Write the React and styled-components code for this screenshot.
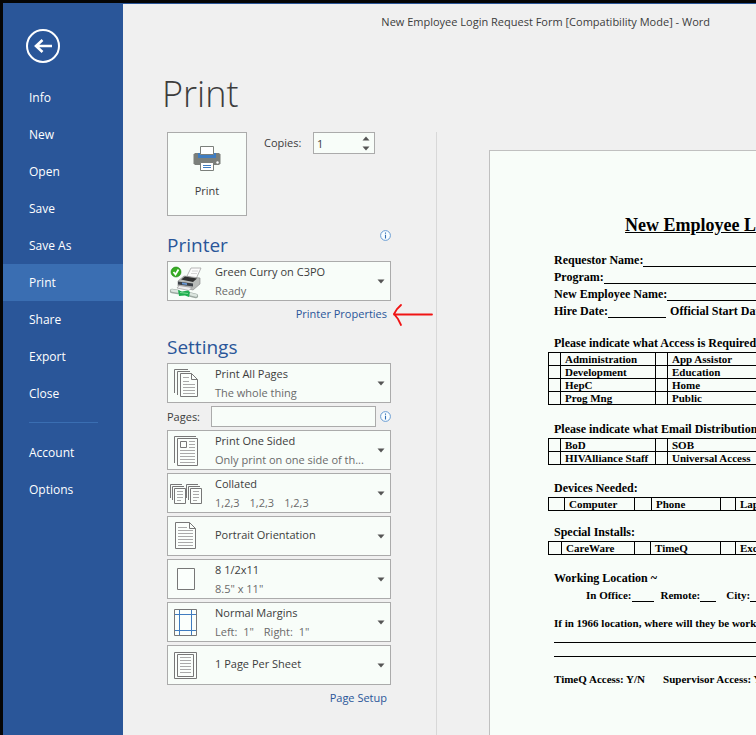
import React, { useState } from "react";
import styled, { createGlobalStyle } from "styled-components";

const GlobalStyle = createGlobalStyle`
  * {
    margin: 0;
    padding: 0;
    box-sizing: border-box;
  }
  body {
    background: #f0f0f0;
    color: #3c3c3c;
    font-family: "Open Sans", "Noto Sans", sans-serif;
    font-size: 11px;
    overflow-x: hidden;
  }
  button, input, select {
    font: inherit;
    color: inherit;
  }
`;

const Shell = styled.div`
  display: grid;
  grid-template-columns: 120px minmax(0, 1fr);
  min-height: 100vh;
  border-left: 3px solid #050505;
  border-top: 3px solid #050505;
`;

const Sidebar = styled.nav`
  display: flex;
  flex-direction: column;
  padding-top: 26px;
  background: #2a5699;
  font-size: 12px;
`;

const BackButton = styled.button`
  width: 34px;
  height: 34px;
  margin: 0 0 16px 23px;
  border: none;
  background: none;
  cursor: pointer;
  svg {
    display: block;
  }
`;

const NavItem = styled.a`
  height: 37px;
  padding-left: 26px;
  line-height: 37px;
  color: #fff;
  text-decoration: none;
  background: ${(p) => (p.$active ? "#3a6eb2" : "transparent")};
  &:hover {
    background: #3a6eb2;
  }
`;

const NavRule = styled.hr`
  margin: 10px 25px 11px 26px;
  border: none;
  border-top: 1px solid #3a6eb2;
`;

const Main = styled.main`
  display: flex;
  flex-direction: column;
  min-width: 0;
  height: calc(100vh - 3px);
  min-height: 700px;
  overflow: hidden;
  border-top: 1px solid #2a5699;
`;

const WindowTitle = styled.header`
  padding: 8px 46px 0 0;
  line-height: 20px;
  text-align: right;
`;

const PageTitle = styled.h1`
  padding-left: 39px;
  margin: 32px 0 8px;
  font-size: 36px;
  font-weight: 300;
  line-height: 60px;
`;

const Columns = styled.div`
  display: flex;
  flex: 1;
  min-height: 0;
`;

const Controls = styled.section`
  flex: none;
  width: 314px;
  padding: 0 45px 0 44px;
  border-right: 1px solid #d8d8d8;
`;

const PrintRow = styled.div`
  display: flex;
  align-items: flex-start;
`;

const PrintButton = styled.button`
  display: flex;
  flex-direction: column;
  align-items: center;
  gap: 12px;
  width: 80px;
  height: 84px;
  padding-top: 12px;
  border: 1px solid #ababab;
  background: #f8fdf9;
  cursor: pointer;
`;

const CopiesLabel = styled.label`
  margin-left: 17px;
  width: 49px;
  line-height: 22px;
`;

const Spinner = styled.div`
  display: flex;
  width: 62px;
  height: 22px;
  border: 1px solid #ababab;
  background: #f8fdf9;
`;

const SpinnerInput = styled.input`
  flex: 1;
  min-width: 0;
  padding-left: 3px;
  border: none;
  background: none;
  appearance: textfield;
  &::-webkit-inner-spin-button {
    appearance: none;
  }
`;

const SpinnerSteps = styled.div`
  display: flex;
  flex-direction: column;
  width: 16px;
`;

const StepButton = styled.button`
  display: flex;
  flex: 1;
  align-items: center;
  justify-content: center;
  border: none;
  background: none;
`;

const SectionHead = styled.div`
  display: flex;
  align-items: flex-start;
  justify-content: space-between;
  padding-top: ${(p) => p.$top}px;
`;

const SectionTitle = styled.h2`
  font-size: 19px;
  font-weight: 400;
  line-height: 31px;
  color: #2a5699;
`;

const InfoButton = styled.button`
  width: 11px;
  height: 11px;
  border: none;
  background: none;
  svg {
    display: block;
  }
`;

const Stack = styled.div`
  display: flex;
  flex-direction: column;
  gap: 3px;
`;

const Picker = styled.label`
  display: grid;
  grid-template-columns: 37px minmax(0, 1fr) 8px;
  align-items: center;
  column-gap: 10px;
  height: 40px;
  padding-right: 5px;
  border: 1px solid #ababab;
  background: #f8fdf9;
  svg {
    display: block;
  }
`;

const PickerText = styled.span`
  display: flex;
  flex-direction: column;
  padding-bottom: ${(p) => (p.$single ? 3 : 0)}px;
  line-height: 19px;
`;

const PickerSelect = styled.select`
  width: 100%;
  height: 19px;
  border: none;
  outline: none;
  background: none;
  appearance: none;
  line-height: 19px;
`;

const PickerDetail = styled.span`
  display: flex;
  gap: 10px;
  color: #6a6a6a;
  white-space: pre;
`;

const PagesRow = styled.div`
  display: flex;
  align-items: center;
  height: 21px;
  gap: 4px;
`;

const PagesLabel = styled.label`
  width: 40px;
`;

const PagesInput = styled.input`
  flex: 1;
  min-width: 0;
  height: 21px;
  padding: 0 4px;
  border: 1px solid #ababab;
  background: #f8fdf9;
`;

const LinkRow = styled.div`
  display: flex;
  justify-content: flex-end;
  padding: 0 4px;
  line-height: 25px;
`;

const TextLink = styled.a`
  position: relative;
  color: #2a5699;
  text-decoration: none;
`;

const ArrowNote = styled.svg`
  position: absolute;
  left: 100%;
  top: 0;
  margin-left: 4px;
`;

const Preview = styled.section`
  flex: 1;
  min-width: 0;
  padding: 18px 0 0 52px;
  overflow: hidden;
`;

const Paper = styled.article`
  width: 550px;
  min-height: 712px;
  padding: 64px 64px 0;
  border: 1px solid #c0c0c0;
  background: #f8fdf9;
  color: #000;
  font-family: "Liberation Serif", serif;
  font-size: 12px;
  font-weight: 700;
`;

const FormTitle = styled.h3`
  margin-bottom: 17px;
  font-size: 18px;
  line-height: 20px;
  text-align: center;
  text-decoration: underline;
  white-space: nowrap;
`;

const FormLine = styled.div`
  display: flex;
  height: ${(p) => (p.$small ? 16 : 17)}px;
  line-height: 17px;
  font-size: ${(p) => (p.$small ? 11 : 12)}px;
  padding-left: ${(p) => (p.$indent ? 32 : 0)}px;
  white-space: pre;
`;

const Blank = styled.span`
  width: ${(p) => (p.$wide ? "100%" : p.$w + "px")};
  flex: ${(p) => (p.$wide ? "1" : "none")};
  margin-right: ${(p) => p.$gap || 0}px;
  height: 15px;
  border-bottom: 1px solid #000;
`;

const FormHeading = styled.h4`
  margin-top: ${(p) => p.$top}px;
  font-size: 12px;
  line-height: 18px;
  white-space: nowrap;
`;

const FormTable = styled.table`
  table-layout: fixed;
  width: 434px;
  margin-left: -6px;
  border-collapse: collapse;
  font-size: 11px;
  td {
    height: 13px;
    padding-left: 4px;
    border: 1px solid #000;
    line-height: 12px;
    white-space: nowrap;
  }
`;

const WriteLine = styled.div`
  height: ${(p) => p.$h}px;
  border-bottom: 1px solid #000;
`;

const Gap = styled.span`
  width: 18px;
`;

const Spacer = styled.div`
  height: ${(p) => p.$h}px;
`;

const Caret = ({ up }) => (
  <svg width="8" height="5" viewBox="0 0 8 5" aria-hidden="true">
    <path d={up ? "M0.5 4.5 4 0.5 7.5 4.5Z" : "M0.5 0.5H7.5L4 4.5Z"} fill="#555" />
  </svg>
);

const Info = () => (
  <InfoButton aria-label="Info">
    <svg width="11" height="11" viewBox="0 0 11 11">
      <circle cx="5.5" cy="5.5" r="4.9" fill="#f8fdff" stroke="#5b93cf" strokeWidth="0.9" />
      <path d="M5.5 4.7V8.4M5.5 2.6V3.8" stroke="#2f6cb3" strokeWidth="1.1" />
    </svg>
  </InfoButton>
);

const PrintGlyph = () => (
  <svg width="28" height="26" viewBox="0 0 28 26" aria-hidden="true">
    <path d="M2 8H26L27.5 9.5V18.5L26 20H2L0.5 18.5V9.5Z" fill="#7b7f7b" />
    <path d="M5 8H23V13H5Z" fill="#3f7cc0" />
    <path d="M7.5 1.5H20.5V9.5H7.5Z" fill="#fff" stroke="#7b7f7b" />
    <path d="M7.5 17.5H20.5V25.5H7.5Z" fill="#fff" stroke="#7b7f7b" />
    <path d="M10 20.5H18M10 22.5H18" stroke="#3f7cc0" />
    <circle cx="24.5" cy="17.5" r="1.2" fill="#fff" />
  </svg>
);

const PrinterDevice = () => (
  <svg width="36" height="36" viewBox="0 0 36 36" aria-hidden="true">
    <path d="M19 13 23 5 33 5 28 16Z" fill="#fcfcfc" stroke="#a5a5a5" strokeWidth="0.8" />
    <path d="M24 8H30M23 10.500H29" stroke="#ccc" strokeWidth="0.8" />
    <path d="M10 18 16 13 32 15V21L25 27 10 23Z" fill="#b9bcb9" stroke="#858585" strokeWidth="0.6" />
    <path d="M13 16.500 17 13.500 29 15.500 25 19Z" fill="#2f2f2f" />
    <path d="M10 18.500 25 20.500V23.500L10 21.500Z" fill="#3c4147" />
    <path d="M14 19.500 19 20.200V22L14 21.300Z" fill="#6798d5" />
    <path d="M11 22.500 24 24.500 21 27.500 9 25Z" fill="#eee" stroke="#8f8f8f" strokeWidth="0.6" />
    <path d="M4 28 10 29M22 31.500 28 33" stroke="#9eaaa3" strokeWidth="4.4" strokeLinecap="round" />
    <path d="M4 27.500 10 28.500M22 31 28 32.500" stroke="#dbe5df" strokeWidth="2.4" strokeLinecap="round" />
    <path d="M10 27 14 28.500 20 27.500 22 29 21 34 17 32.500 11 33Z" fill="#1eaf4f" />
    <path d="M12 29.500 20 30.500" stroke="#7edb97" strokeWidth="1.2" />
    <circle cx="8" cy="9" r="5" fill="#36ad22" stroke="#198211" strokeWidth="0.6" />
    <path d="M5.500 9 7.500 11.500 10.500 6.500" fill="none" stroke="#fff" strokeWidth="1.8" />
  </svg>
);

const stroke = { fill: "#fbfffc", stroke: "#777", strokeWidth: 1 };

const AllPages = () => (
  <svg width="36" height="36" viewBox="0 0 36 36" aria-hidden="true">
    <path d="M6.5 28V4.5H20M9.5 30V6.5H22" fill="none" stroke="#777" />
    <path d="M12.5 8.5H23.5L29.5 14.5V31.5H12.5Z" {...stroke} />
    <path d="M23.5 8.5V14.5H29.5" fill="none" stroke="#777" />
    <path d="M15 12.5H21M15 16.5H21M15 19.5H27M15 22.5H27M15 25.5H27M15 28.5H27" stroke="#aaa" />
  </svg>
);

const OneSided = () => (
  <svg width="36" height="36" viewBox="0 0 36 36" aria-hidden="true">
    <path d="M6.5 31V4.5H28" fill="none" stroke="#777" />
    <path d="M9.5 6.5H29.5V33.5H9.5Z" {...stroke} />
    <path d="M12.5 9.5H18.5V15.5H12.5Z" fill="none" stroke="#777" />
    <path d="M21 9.5H27M21 12.5H27M21 15.5H27M12 18.5H27M12 21.5H27M12 24.5H27M12 27.5H27M12 30.5H27" stroke="#aaa" />
  </svg>
);

const CollatedSet = ({ x }) => (
  <g transform={`translate(${x} 0)`}>
    <path d="M0.5 23V9.5H12M2.5 25V11.5H14" fill="none" stroke="#777" />
    <path d="M4.5 13.5H15.5V28.5H4.5Z" {...stroke} />
    <path d="M7 16.5H13M7 19.5H13M7 22.5H13M7 25.5H11" stroke="#aaa" />
  </g>
);

const Collated = () => (
  <svg width="36" height="36" viewBox="0 0 36 36" aria-hidden="true">
    <CollatedSet x={2} />
    <CollatedSet x={18} />
  </svg>
);

const Portrait = () => (
  <svg width="36" height="36" viewBox="0 0 36 36" aria-hidden="true">
    <path d="M7.5 4.5H21.5L27.5 10.5V30.5H7.5Z" {...stroke} />
    <path d="M21.5 4.5V10.5H27.5" fill="none" stroke="#777" />
    <path d="M10 9.5H19M10 12.5H25M10 15.5H25M10 18.5H25M10 21.5H25M10 24.5H25M10 27.5H25" stroke="#aaa" />
  </svg>
);

const PaperSize = () => (
  <svg width="36" height="36" viewBox="0 0 36 36" aria-hidden="true">
    <path d="M9.5 7.5H26.5V28.5H9.5Z" {...stroke} />
  </svg>
);

const Margins = () => (
  <svg width="36" height="36" viewBox="0 0 36 36" aria-hidden="true">
    <path d="M6.5 5.5H28.5V31.5H6.5Z" {...stroke} />
    <path d="M11.5 6V31M23.5 6V31M7 10.5H28M7 26.5H28" stroke="#3f7cc0" />
  </svg>
);

const PerSheet = () => (
  <svg width="36" height="36" viewBox="0 0 36 36" aria-hidden="true">
    <path d="M6.5 5.5H28.5V31.5H6.5Z" {...stroke} />
    <path d="M9.5 7.5H25.5V29.5H9.5Z" {...stroke} />
    <path d="M12 10.5H23M12 13.5H23M12 16.5H23M12 19.5H23M12 22.5H23M12 25.5H23" stroke="#aaa" />
  </svg>
);

const navItems = ["Info", "New", "Open", "Save", "Save As", "Print", "Share", "Export", "Close"];

const layoutPickers = [
  { name: "Sides", icon: <OneSided />, options: ["Print One Sided", "Print on Both Sides"], detail: ["Only print on one side of th..."] },
  { name: "Collation", icon: <Collated />, options: ["Collated", "Uncollated"], detail: ["1,2,3", "1,2,3", "1,2,3"] },
  { name: "Orientation", icon: <Portrait />, options: ["Portrait Orientation", "Landscape Orientation"] },
  { name: "Paper size", icon: <PaperSize />, options: ["8 1/2x11", "Legal"], detail: ['8.5" x 11"'] },
  { name: "Margins", icon: <Margins />, options: ["Normal Margins", "Narrow Margins"], detail: ['Left:  1"', 'Right:  1"'] },
  { name: "Pages per sheet", icon: <PerSheet />, options: ["1 Page Per Sheet", "2 Pages Per Sheet"] },
];

function Dropdown({ name, icon, options, detail }) {
  return (
    <Picker>
      {icon}
      <PickerText $single={!detail}>
        <PickerSelect aria-label={name}>
          {options.map((o) => (
            <option key={o}>{o}</option>
          ))}
        </PickerSelect>
        {detail && (
          <PickerDetail>
            {detail.map((d, i) => (
              <span key={i}>{d}</span>
            ))}
          </PickerDetail>
        )}
      </PickerText>
      <Caret />
    </Picker>
  );
}

function Grid({ cols, rows }) {
  return (
    <FormTable>
      <colgroup>
        {cols.map((w, i) => (
          <col key={i} width={w} />
        ))}
        <col />
      </colgroup>
      <tbody>
        {rows.map((row) => (
          <tr key={row[0]}>
            {row.map((cell) => (
              <React.Fragment key={cell}>
                <td></td>
                <td>{cell}</td>
              </React.Fragment>
            ))}
          </tr>
        ))}
      </tbody>
    </FormTable>
  );
}

function FormPreview() {
  return (
    <Paper>
      <FormTitle>New Employee Login Request Form</FormTitle>
      <FormLine>Requestor Name:<Blank $wide /></FormLine>
      <FormLine>Program:<Blank $wide /></FormLine>
      <FormLine>New Employee Name:<Blank $wide /></FormLine>
      <FormLine>Hire Date:<Blank $w={58} $gap={4} />Official Start Date:<Blank $wide /></FormLine>

      <FormHeading $top={14}>Please indicate what Access is Required:</FormHeading>
      <Grid
        cols={[12, 95, 12]}
        rows={[["Administration", "App Assistor"], ["Development", "Education"], ["HepC", "Home"], ["Prog Mng", "Public"]]}
      />
      <FormHeading $top={15}>Please indicate what Email Distribution:</FormHeading>
      <Grid cols={[12, 95, 12]} rows={[["BoD", "SOB"], ["HIVAlliance Staff", "Universal Access"]]} />
      <FormHeading $top={14}>Devices Needed:</FormHeading>
      <Grid cols={[16, 70, 17, 69, 15]} rows={[["Computer", "Phone", "Laptop"]]} />
      <FormHeading $top={12}>Special Installs:</FormHeading>
      <Grid cols={[13, 73, 16, 70, 15]} rows={[["CareWare", "TimeQ", "Excel"]]} />

      <FormHeading $top={14}>Working Location ~</FormHeading>
      <FormLine $small $indent>
        In Office:<Blank $w={22} $gap={7} />Remote:<Blank $w={16} $gap={10} />City:<Blank $w={60} />
      </FormLine>
      <Spacer $h={12} />
      <FormLine $small>If in 1966 location, where will they be working?</FormLine>
      <WriteLine $h={12} />
      <WriteLine $h={14} />
      <Spacer $h={14} />
      <FormLine $small>TimeQ Access: Y/N<Gap />Supervisor Access: Y/N</FormLine>
    </Paper>
  );
}

function App() {
  const [copies, setCopies] = useState(1);

  return (
    <>
      <GlobalStyle />
      <Shell>
        <Sidebar>
          <BackButton aria-label="Back">
            <svg width="34" height="34" viewBox="0 0 34 34" fill="none" stroke="#fff">
              <circle cx="17" cy="17" r="16" strokeWidth="2" />
              <path d="M26 17H10.5M16.5 11 10 17 16.5 23" strokeWidth="2.6" />
            </svg>
          </BackButton>
          {navItems.map((item) => (
            <NavItem key={item} href="#" $active={item === "Print"}>{item}</NavItem>
          ))}
          <NavRule />
          <NavItem href="#">Account</NavItem>
          <NavItem href="#">Options</NavItem>
        </Sidebar>

        <Main>
          <WindowTitle>New Employee Login Request Form [Compatibility Mode] - Word</WindowTitle>
          <PageTitle>Print</PageTitle>
          <Columns>
            <Controls>
              <PrintRow>
                <PrintButton>
                  <PrintGlyph />
                  Print
                </PrintButton>
                <CopiesLabel htmlFor="copies">Copies:</CopiesLabel>
                <Spinner>
                  <SpinnerInput
                    id="copies"
                    type="number"
                    min="1"
                    value={copies}
                    onChange={(e) => setCopies(Number(e.target.value))}
                  />
                  <SpinnerSteps>
                    <StepButton aria-label="More copies" onClick={() => setCopies(copies + 1)}><Caret up /></StepButton>
                    <StepButton aria-label="Fewer copies" onClick={() => setCopies(Math.max(1, copies - 1))}><Caret /></StepButton>
                  </SpinnerSteps>
                </Spinner>
              </PrintRow>

              <SectionHead $top={14}>
                <SectionTitle>Printer</SectionTitle>
                <Info />
              </SectionHead>
              <Dropdown name="Printer" icon={<PrinterDevice />} options={["Green Curry on C3PO"]} detail={["Ready"]} />
              <LinkRow>
                <TextLink href="#">
                  Printer Properties
                  <ArrowNote width="43" height="26" viewBox="0 0 43 26" fill="none" stroke="#f01414" strokeWidth="1.8" strokeLinecap="round" aria-hidden="true">
                    <path d="M3 13.5H41M10 4 6 8 3 13 7 18 10 24" />
                  </ArrowNote>
                </TextLink>
              </LinkRow>

              <SectionHead $top={6}>
                <SectionTitle>Settings</SectionTitle>
              </SectionHead>
              <Stack>
                <Dropdown name="Print range" icon={<AllPages />} options={["Print All Pages", "Print Current Page"]} detail={["The whole thing"]} />
                <PagesRow>
                  <PagesLabel htmlFor="pages">Pages:</PagesLabel>
                  <PagesInput id="pages" type="text" />
                  <Info />
                </PagesRow>
                {layoutPickers.map((p) => (
                  <Dropdown key={p.name} {...p} />
                ))}
              </Stack>
              <LinkRow>
                <TextLink href="#">Page Setup</TextLink>
              </LinkRow>
            </Controls>

            <Preview>
              <FormPreview />
            </Preview>
          </Columns>
        </Main>
      </Shell>
    </>
  );
}

export default App;
